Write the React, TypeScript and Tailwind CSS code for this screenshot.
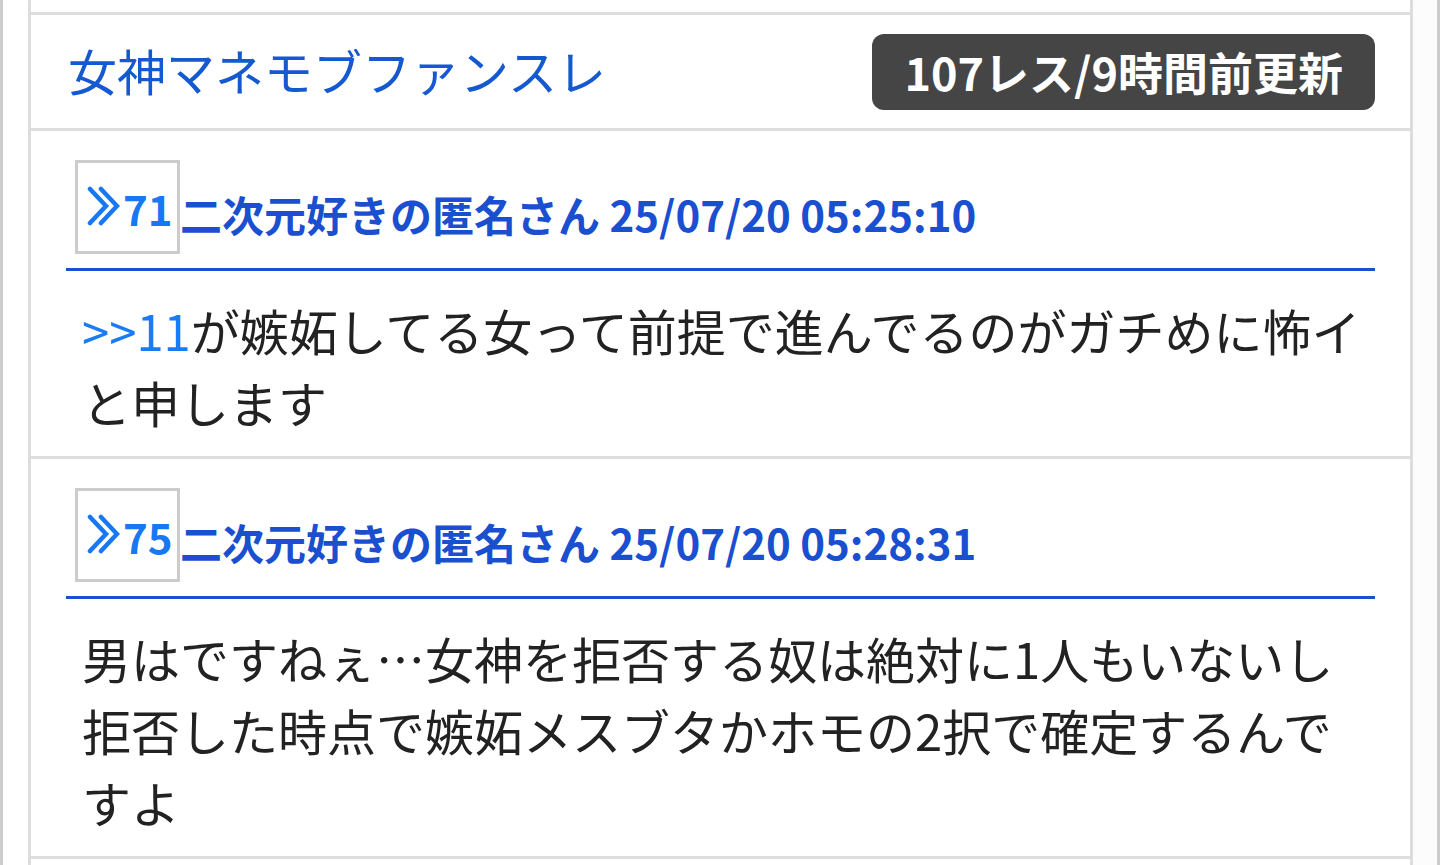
const posts = [
  {
    no: 71,
    name: "二次元好きの匿名さん",
    date: "25/07/20 05:25:10",
    anchor: ">>11",
    body: "が嫉妬してる女って前提で進んでるのがガチめに怖イと申します",
  },
  {
    no: 75,
    name: "二次元好きの匿名さん",
    date: "25/07/20 05:28:31",
    anchor: "",
    body: "男はですねぇ…女神を拒否する奴は絶対に1人もいないし拒否した時点で嫉妬メスブタかホモの2択で確定するんですよ",
  },
];

function DoubleChevron() {
  return (
    <svg width="33" height="40" viewBox="0 0 33 40" className="shrink-0">
      <polyline
        points="3,3 19,20 3,37"
        fill="none"
        stroke="#1877f2"
        strokeWidth="4.5"
        strokeLinecap="round"
        strokeLinejoin="miter"
      />
      <polyline
        points="14,3 30,20 14,37"
        fill="none"
        stroke="#1877f2"
        strokeWidth="4.5"
        strokeLinecap="round"
        strokeLinejoin="miter"
      />
    </svg>
  );
}

export default function App() {
  return (
    <div className="flex h-[865px] overflow-hidden bg-white font-['Noto_Sans_CJK_JP','Noto_Sans',sans-serif]">
      {/* 左端のライン */}
      <div className="w-[3px] bg-[#cccccc]" />
      <div className="w-[25px]" />

      {/* スレッド本体 */}
      <div className="w-[1385px] border-x-[3px] border-[#dddddd]">
        <div className="h-[15px] border-b-[3px] border-[#dddddd]" />

        {/* スレタイ */}
        <div className="flex h-[116px] items-center justify-between border-b-[3px] border-[#dddddd] pl-[37px] pr-[35px]">
          <h1 className="mb-[4px] text-[49px] leading-none text-[#1559d1]">
            女神マネモブファンスレ
          </h1>
          <div className="flex h-[76px] items-center rounded-[12px] bg-[#454545] px-[32px] text-[45px] font-bold leading-none text-white">
            107レス/9時間前更新
          </div>
        </div>

        {/* レス */}
        {posts.map((post) => (
          <div
            key={post.no}
            className="border-b-[3px] border-[#dddddd] px-[35px] pt-[29px]"
          >
            <div className="flex items-center border-b-[3px] border-[#1a4fcf] pb-[14px] pl-[9px]">
              <div className="flex h-[94px] w-[105px] items-center gap-[3px] border-[3px] border-[#cccccc] pb-[2px] pl-[9px] text-[42px] leading-none text-[#1877f2]">
                <DoubleChevron />
                <span className="mt-[4px] font-bold">{post.no}</span>
              </div>
              <p className="mt-[13px] text-[42px] font-bold leading-none text-[#1a4fcf]">
                {post.name} {post.date}
              </p>
            </div>
            <p className="pb-[18px] pl-4 pt-[23px] text-[49px] leading-[72px] text-[#222222]">
              {post.anchor && (
                <span className="text-[#1a7cf5]">{post.anchor}</span>
              )}
              {post.body}
            </p>
          </div>
        ))}
      </div>

      <div className="flex-1 bg-[#fcfcfc]" />
      <div className="w-[3px] bg-[#cccccc]" />
    </div>
  );
}
